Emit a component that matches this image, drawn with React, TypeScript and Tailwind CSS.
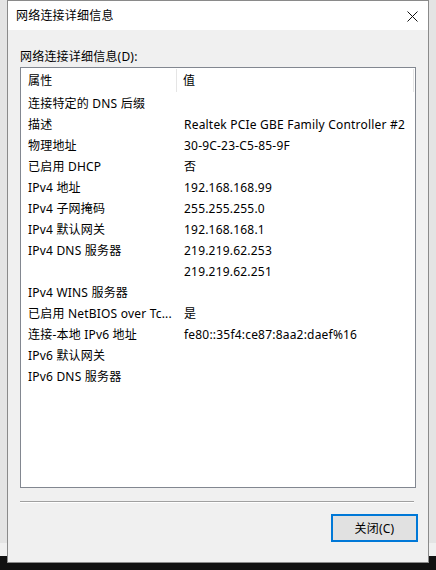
const rows: [string, string][] = [
  ["连接特定的 DNS 后缀", ""],
  ["描述", "Realtek PCIe GBE Family Controller #2"],
  ["物理地址", "30-9C-23-C5-85-9F"],
  ["已启用 DHCP", "否"],
  ["IPv4 地址", "192.168.168.99"],
  ["IPv4 子网掩码", "255.255.255.0"],
  ["IPv4 默认网关", "192.168.168.1"],
  ["IPv4 DNS 服务器", "219.219.62.253"],
  ["", "219.219.62.251"],
  ["IPv4 WINS 服务器", ""],
  ["已启用 NetBIOS over Tc...", "是"],
  ["连接-本地 IPv6 地址", "fe80::35f4:ce87:8aa2:daef%16"],
  ["IPv6 默认网关", ""],
  ["IPv6 DNS 服务器", ""],
];

const font = { fontFamily: '"Noto Sans", "Noto Sans CJK SC", sans-serif' };

export default function App() {
  return (
    <div
      className="relative w-[436px] h-[570px] overflow-hidden bg-[#111111] text-[12px] tracking-[0.2px] text-black"
      style={font}
    >
      {/* desktop behind the dialog */}
      <div className="h-[543px] bg-[#e4e4e4]" />
      <div className="h-[13px] bg-[#f0f0f0]" />

      {/* dialog window */}
      <div className="absolute left-[7px] top-0 w-[422px] h-[563px] border border-[#8a8a8a] bg-[#f0f0f0] flex flex-col">
        {/* title bar */}
        <div className="h-[29px] bg-white flex items-center justify-between pl-[8px] pr-[10px] pt-[1px]">
          <span className="leading-none">网络连接详细信息</span>
          <svg width="11" height="11" viewBox="0 0 11 11">
            <path d="M0.5 0.5 L10.5 10.5 M10.5 0.5 L0.5 10.5" stroke="#111" strokeWidth="1" />
          </svg>
        </div>

        {/* body */}
        <div className="flex-1 flex flex-col pl-[12px] pr-[12px]">
          <div className="h-[37px] flex items-end pb-[4px] leading-none">
            网络连接详细信息(D):
          </div>

          <div className="w-[396px] h-[421px] border border-[#828790] bg-white flex flex-col">
            {/* header */}
            <div className="h-[25px] flex pt-[1px]">
              <div className="w-[156px] pl-[7px] flex items-center border-r border-[#e5e5e5] mb-[1px] pt-[1px]">
                属性
              </div>
              <div className="flex-1 pl-[6px] flex items-center border-r border-[#e5e5e5] mr-[1px] mb-[1px] pt-[1px]">
                值
              </div>
            </div>
            {/* rows */}
            <div className="flex flex-col">
              {rows.map(([k, v], i) => (
                <div key={i} className="h-[21px] flex items-center pt-[1px]">
                  <div className="w-[156px] pl-[7px] whitespace-nowrap overflow-hidden">{k}</div>
                  <div className="pl-[7px] whitespace-nowrap">{v}</div>
                </div>
              ))}
            </div>
          </div>

          {/* separator */}
          <div className="mt-[13px] w-[394px] h-[2px] border-t border-[#a0a0a0] border-b border-b-white" />

          {/* button */}
          <div className="flex justify-end mt-[11px]">
            <button className="w-[87px] h-[28px] border-2 border-[#0078d7] bg-[#e1e1e1] flex items-center justify-center leading-none -mr-[2px] pt-[1px]">
              关闭(C)
            </button>
          </div>
        </div>
      </div>
    </div>
  );
}
